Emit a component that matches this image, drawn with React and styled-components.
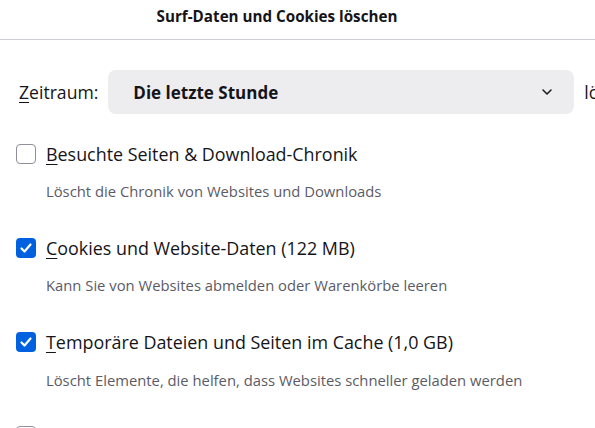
import React from 'react';
import styled, { createGlobalStyle } from 'styled-components';

const Global = createGlobalStyle`
  html, body { margin: 0; padding: 0; background: #fff; }
  body { width: 595px; height: 428px; overflow: hidden; }
`;

const font = `"Open Sans", "Noto Sans", sans-serif`;

const Dialog = styled.div`
  width: 595px;
  height: 428px;
  overflow: hidden;
  font-family: ${font};
  color: #15141a;
`;

const Header = styled.div`
  height: 39px;
  border-bottom: 1px solid #cfcfd8;
  display: flex;
  align-items: center;
  justify-content: center;
  padding-right: 41px;
`;

const Title = styled.h1`
  margin: 0;
  font-size: 15.2px;
  font-weight: 700;
  position: relative;
  top: -4px;
`;

const Body = styled.div`
  padding: 30px 0 0 16px;
  display: flex;
  flex-direction: column;
`;

const RangeRow = styled.div`
  display: flex;
  align-items: center;
  gap: 10px;
  white-space: nowrap;
  padding-left: 3px;
  margin-bottom: 27.5px;
`;

const Label = styled.span`
  font-size: 17.6px;
  width: 80px;
`;

const Key = styled.span`
  text-decoration: underline;
  text-underline-offset: 3px;
`;

const Select = styled.div`
  flex: 0 0 466px;
  height: 44px;
  box-sizing: border-box;
  background: #ededf0;
  border-radius: 8px;
  display: flex;
  align-items: center;
  justify-content: space-between;
  padding: 0 20px 0 25px;
  font-size: 17px;
  font-weight: 700;
`;

const Trailing = styled.span`
  font-size: 17.6px;
`;

const Option = styled.div`
  display: flex;
  flex-direction: column;
  margin-bottom: ${p => p.$gap}px;
`;

const OptionRow = styled.label`
  display: flex;
  align-items: center;
  gap: 10px;
  font-size: 17.9px;
  height: 24px;
`;

const Box = styled.span`
  width: 20px;
  height: 20px;
  box-sizing: border-box;
  border-radius: 4px;
  flex: none;
  display: flex;
  align-items: center;
  justify-content: center;
  border: ${p => (p.$checked ? 'none' : '1px solid #8f8f9d')};
  background: ${p => (p.$checked ? '#0061e0' : '#fff')};
`;

const Desc = styled.div`
  margin: 15.5px 0 0 30px;
  font-size: 14.8px;
  line-height: 20px;
  color: #5b5b66;
  white-space: nowrap;
`;

const Chevron = () => (
  <svg width="14" height="14" viewBox="0 0 14 14" fill="none">
    <path d="M3 5l4 4 4-4" stroke="#15141a" strokeWidth="1.5" strokeLinecap="round" strokeLinejoin="round" />
  </svg>
);

const Check = () => (
  <svg width="14" height="14" viewBox="0 0 14 14" fill="none">
    <path d="M2.5 7.5l3 3 6-7" stroke="#fff" strokeWidth="2.2" strokeLinecap="round" strokeLinejoin="round" />
  </svg>
);

const options = [
  { key: 'B', rest: 'esuchte Seiten & Download-Chronik', desc: 'Löscht die Chronik von Websites und Downloads', checked: false },
  { key: 'C', rest: 'ookies und Website-Daten (122 MB)', desc: 'Kann Sie von Websites abmelden oder Warenkörbe leeren', checked: true },
  { key: 'T', rest: 'emporäre Dateien und Seiten im Cache (1,0 GB)', desc: 'Löscht Elemente, die helfen, dass Websites schneller geladen werden', checked: true },
  { key: '', rest: '', desc: '', checked: false },
];

const App = () => (
  <Dialog>
    <Global />
    <Header>
      <Title>Surf-Daten und Cookies löschen</Title>
    </Header>
    <Body>
      <RangeRow>
        <Label><Key>Z</Key>eitraum:</Label>
        <Select>
          Die letzte Stunde
          <Chevron />
        </Select>
        <Trailing>löschen</Trailing>
      </RangeRow>
      {options.map((o, i) => (
        <Option key={i} $gap={i === 3 ? 0 : 34.8}>
          <OptionRow>
            <Box $checked={o.checked}>{o.checked && <Check />}</Box>
            {o.key && <span><Key>{o.key}</Key>{o.rest}</span>}
          </OptionRow>
          {o.desc && <Desc>{o.desc}</Desc>}
        </Option>
      ))}
    </Body>
  </Dialog>
);

export default App;
